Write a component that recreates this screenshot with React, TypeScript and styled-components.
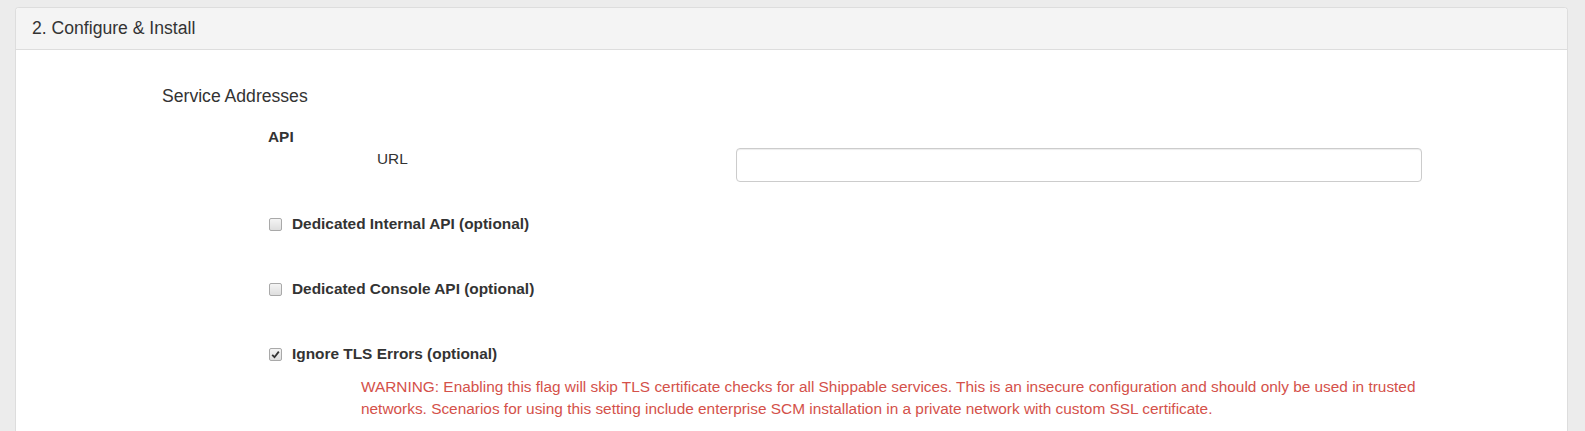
import React from 'react';
import styled, { createGlobalStyle } from 'styled-components';

const GlobalStyle = createGlobalStyle`
  html, body {
    margin: 0;
    padding: 0;
    background: #ececec;
  }
  body {
    font-family: "Liberation Sans", Arial, sans-serif;
    font-size: 15.4px;
    color: #333;
  }
`;

const Page = styled.div`
  padding: 7px 17px 0 15px;
`;

const Panel = styled.section`
  background: #fff;
  border: 1px solid #ddd;
  border-bottom: none;
  border-radius: 4px 4px 0 0;
  min-height: 424px;
`;

const PanelHeading = styled.header`
  height: 41px;
  display: flex;
  align-items: center;
  padding: 0 16px;
  background: #f4f4f4;
  border-bottom: 1px solid #ddd;
  border-radius: 3px 3px 0 0;
  font-size: 17.6px;
`;

const PanelBody = styled.div`
  padding-top: 35px;
`;

const SectionTitle = styled.h3`
  margin: 0 0 19px 146px;
  font-size: 17.6px;
  font-weight: normal;
  line-height: 22px;
`;

const Group = styled.div`
  margin-left: 252px;
  width: 1154px;
`;

const GroupTitle = styled.div`
  font-weight: bold;
  line-height: 22px;
`;

const FieldRow = styled.div`
  display: flex;
  align-items: flex-start;
`;

const FieldLabel = styled.label`
  width: 468px;
  padding-left: 109px;
  box-sizing: border-box;
  line-height: 22px;
`;

const TextInput = styled.input`
  width: 686px;
  height: 34px;
  box-sizing: border-box;
  border: 1px solid #ccc;
  border-radius: 4px;
  box-shadow: inset 0 1px 1px rgba(0, 0, 0, 0.075);
  padding: 6px 12px;
  font: inherit;
`;

const CheckRow = styled.label<{ gap: number }>`
  display: flex;
  align-items: center;
  gap: 10px;
  margin-top: ${(p) => p.gap}px;
  margin-left: 1px;
  line-height: 22px;
  font-weight: bold;
`;

const Box = styled.span`
  width: 13px;
  height: 13px;
  box-sizing: border-box;
  border: 1px solid #a9a9a9;
  border-radius: 2px;
  background: linear-gradient(#f4f4f4, #dedede);
  display: flex;
  align-items: center;
  justify-content: center;
`;

const Warning = styled.p`
  margin: 11px 0 0 93px;
  width: 1061px;
  color: #d4514a;
  line-height: 22px;
`;

const Checkbox = ({ checked }: { checked?: boolean }) => (
  <Box>
    {checked && (
      <svg width="9" height="9" viewBox="0 0 9 9">
        <path d="M1.2 4.8 L3.5 7.2 L7.8 1.6" fill="none" stroke="#333" strokeWidth="1.8" />
      </svg>
    )}
  </Box>
);

export default function App() {
  return (
    <>
      <GlobalStyle />
      <Page>
        <Panel>
          <PanelHeading>2. Configure &amp; Install</PanelHeading>
          <PanelBody>
            <SectionTitle>Service Addresses</SectionTitle>
            <Group>
              <GroupTitle>API</GroupTitle>
              <FieldRow>
                <FieldLabel>URL</FieldLabel>
                <TextInput type="text" />
              </FieldRow>
              <CheckRow gap={31}>
                <Checkbox />
                Dedicated Internal API (optional)
              </CheckRow>
              <CheckRow gap={43}>
                <Checkbox />
                Dedicated Console API (optional)
              </CheckRow>
              <CheckRow gap={43}>
                <Checkbox checked />
                Ignore TLS Errors (optional)
              </CheckRow>
              <Warning>
                WARNING: Enabling this flag will skip TLS certificate checks for all Shippable services. This is an
                insecure configuration and should only be used in trusted networks. Scenarios for using this setting
                include enterprise SCM installation in a private network with custom SSL certificate.
              </Warning>
            </Group>
          </PanelBody>
        </Panel>
      </Page>
    </>
  );
}
